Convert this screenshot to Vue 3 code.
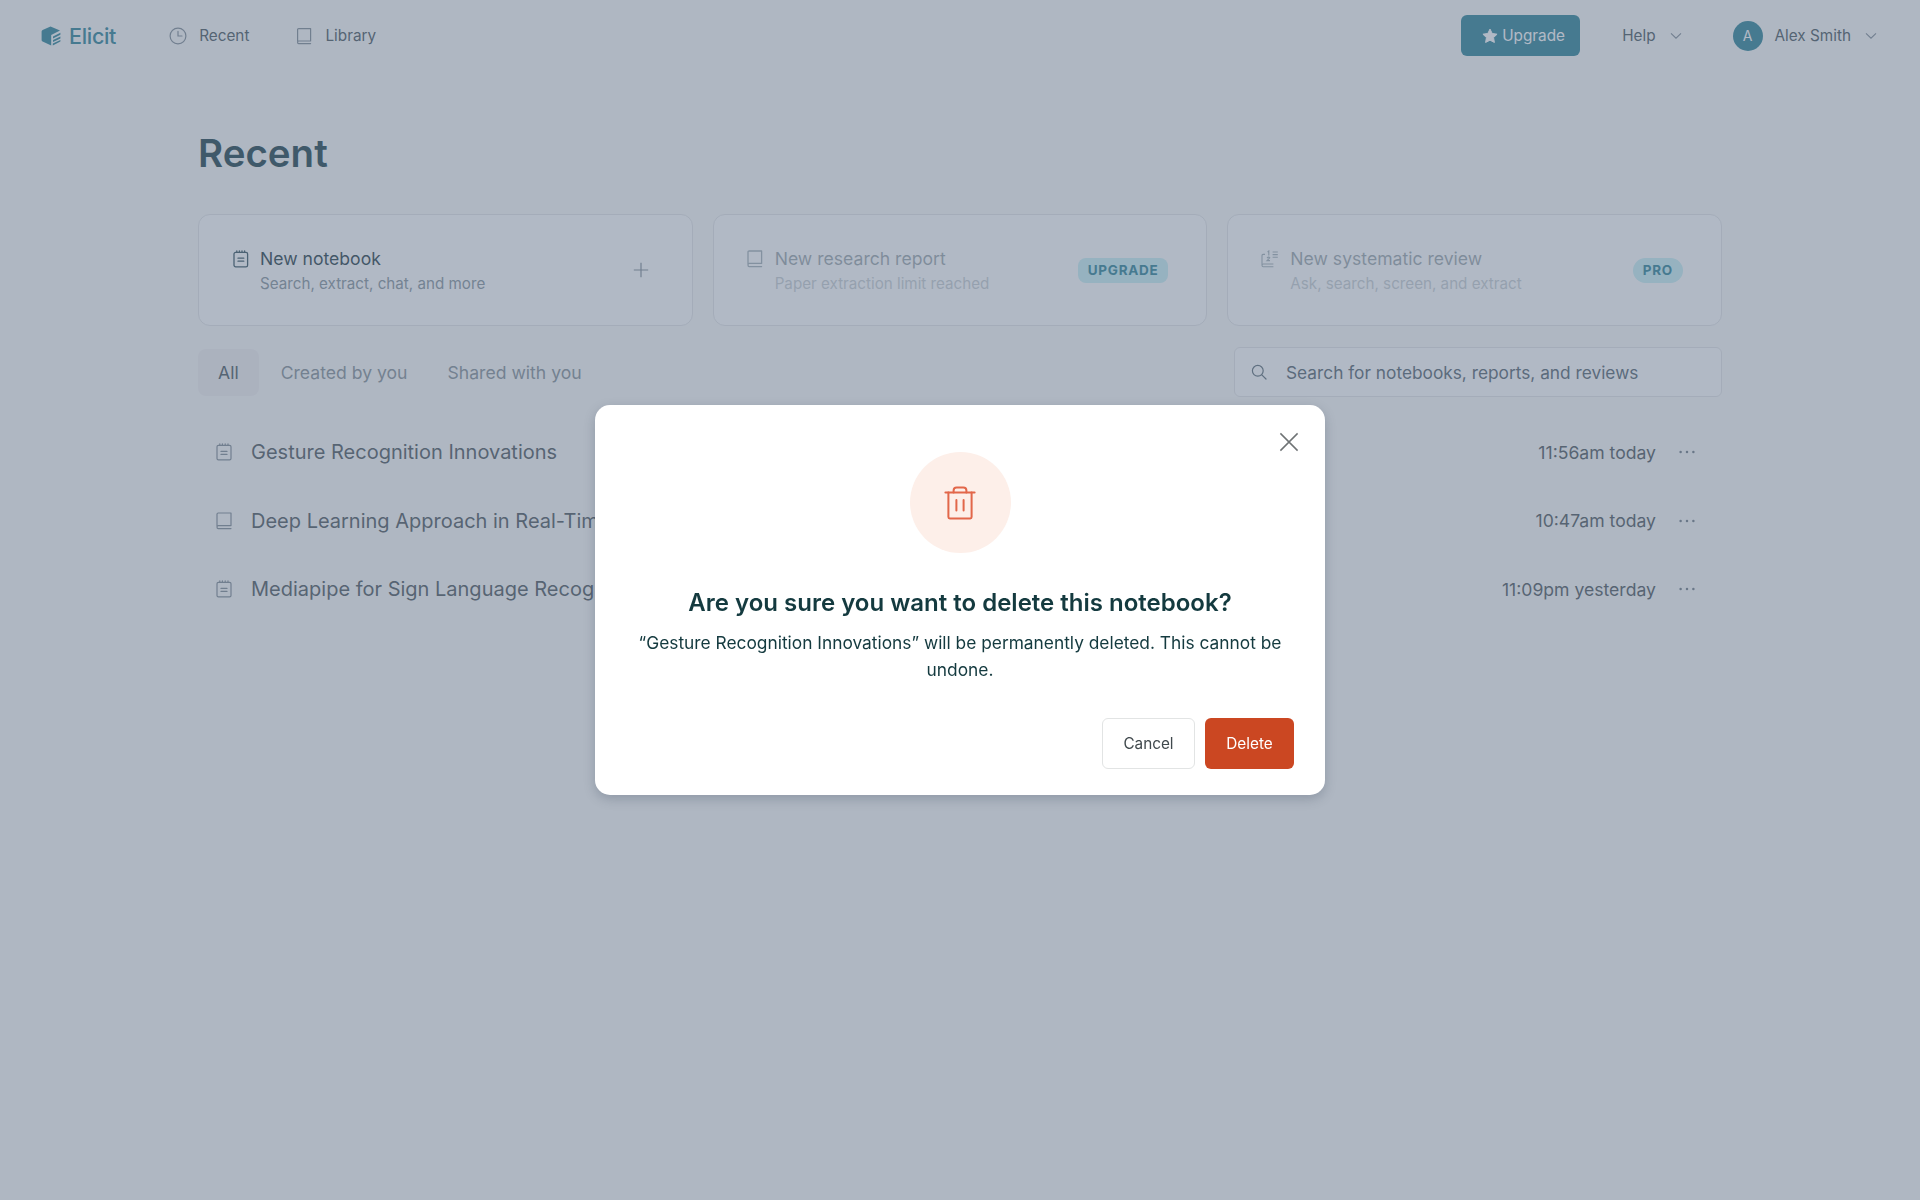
<script setup>
const rows = [
  { name: 'Gesture Recognition Innovations', time: '11:56am today', icon: 'note' },
  { name: 'Deep Learning Approach in Real-Time Gesture Detection', time: '10:47am today', icon: 'book' },
  { name: 'Mediapipe for Sign Language Recognition Systems', time: '11:09pm yesterday', icon: 'note' },
]
</script>

<template>
  <div class="page">
    <header class="topbar">
      <div class="brand">
        <svg class="logo" viewBox="0 0 20 20" width="20" height="20">
          <path d="M9.5 0.5 L19 4.6 L10.2 9 L10.2 19.4 L1.6 15.6 Q0.6 15.1 0.6 14 L0.6 5.6 Q0.6 4.6 1.6 4.1 Z" fill="#288095" />
          <path d="M12 10.4 L19.4 6.8 L19.4 8.8 L12 12.4 Z M12 14 L19.4 10.4 L19.4 12.4 L12 16 Z M11.8 17.6 L19.4 14 L19.4 15.6 L11.8 19.4 Z" fill="#288095" />
        </svg>
        <span class="brand-name">Elicit</span>
      </div>
      <nav class="nav">
        <a class="nav-item">
          <svg viewBox="0 0 18 18" width="18" height="18" fill="none" stroke="#7f8a93" stroke-width="1.2" stroke-linecap="round">
            <circle cx="9" cy="9" r="7.9" />
            <path d="M9 4.4 V9 H13" />
          </svg>
          Recent
        </a>
        <a class="nav-item">
          <svg viewBox="0 0 18 18" width="18" height="18" fill="none" stroke="#7f8a93" stroke-width="1.2" stroke-linecap="round" stroke-linejoin="round">
            <path d="M2.6 14 V2.6 Q2.6 1.6 3.6 1.6 H15.6 V14 H3.6 Q2.6 14 2.6 15.2 Q2.6 16.6 3.6 16.6 H15.6" />
          </svg>
          Library
        </a>
      </nav>
      <div class="top-right">
        <button class="upgrade-btn">
          <svg viewBox="0 0 24 24" width="16" height="16" fill="#ffffff">
            <path d="M12 1.6 L15.3 8.2 L22.6 9.3 L17.3 14.4 L18.6 21.7 L12 18.3 L5.4 21.7 L6.7 14.4 L1.4 9.3 L8.7 8.2 Z" stroke="#ffffff" stroke-width="1.5" stroke-linejoin="round" />
          </svg>
          Upgrade
        </button>
        <div class="menu help-menu">
          Help
          <svg class="chev" viewBox="0 0 12 8" width="12" height="8" fill="none" stroke="#7f8a93" stroke-width="1.1"><path d="M1 1.4 L6 6.2 L11 1.4" /></svg>
        </div>
        <div class="menu">
          <span class="avatar">A</span>
          Alex Smith
          <svg class="chev" viewBox="0 0 12 8" width="12" height="8" fill="none" stroke="#7f8a93" stroke-width="1.1"><path d="M1 1.4 L6 6.2 L11 1.4" /></svg>
        </div>
      </div>
    </header>

    <main class="main">
      <h1 class="title">Recent</h1>

      <section class="cards">
        <div class="card">
          <svg class="card-icon" viewBox="0 0 16 18" width="16" height="18" fill="none" stroke="#33505c" stroke-width="1.3" stroke-linecap="round" stroke-linejoin="round">
            <rect x="1" y="2.4" width="13.6" height="14.4" rx="1.6" />
            <path d="M3.8 0.8 V2.4 M6.4 0.8 V2.4 M9 0.8 V2.4 M11.6 0.8 V2.4 M5 8.2 H10.8 M5 11.2 H10.8" />
          </svg>
          <div class="card-text">
            <div class="card-title">New notebook</div>
            <div class="card-sub">Search, extract, chat, and more</div>
          </div>
          <svg class="plus" viewBox="0 0 16 16" width="16" height="16" fill="none" stroke="#7f8a93" stroke-width="1.2"><path d="M8 .8 V15.2 M.8 8 H15.2" /></svg>
        </div>

        <div class="card disabled">
          <div class="faded">
            <svg class="card-icon" viewBox="0 0 16 18" width="16" height="18" fill="none" stroke="#33505c" stroke-width="1.3" stroke-linecap="round" stroke-linejoin="round">
              <path d="M1 14 V2.2 Q1 1 2.2 1 H14.6 V13.4 H2.2 Q1 13.4 1 15 Q1 16.6 2.2 16.6 H14.6" />
            </svg>
            <div class="card-text">
              <div class="card-title">New research report</div>
              <div class="card-sub">Paper extraction limit reached</div>
            </div>
          </div>
          <span class="badge">UPGRADE</span>
        </div>

        <div class="card disabled">
          <div class="faded">
            <svg class="card-icon wide" viewBox="0 0 18 18" width="18" height="18" fill="none" stroke="#33505c" stroke-width="1.1">
              <path d="M4 4.4 H2 Q1 4.4 1 5.4 V15.2 Q1 14 2.2 14 H12.4 M1 15.2 Q1 16.8 2.2 16.8 H12.4" />
              <path d="M6.6 2 L7.8 1 V5.4 M6 8 Q7.8 6.4 8.8 7.8 L6 10.6 H9 M11.6 2 H16.8 M11.6 4.6 H16.8 M11.6 7.2 H16.8" />
            </svg>
            <div class="card-text">
              <div class="card-title">New systematic review</div>
              <div class="card-sub">Ask, search, screen, and extract</div>
            </div>
          </div>
          <span class="badge pro">PRO</span>
        </div>
      </section>

      <section class="filters">
        <div class="tabs">
          <span class="tab active">All</span>
          <span class="tab">Created by you</span>
          <span class="tab">Shared with you</span>
        </div>
        <div class="search">
          <svg viewBox="0 0 16 16" width="16" height="16" fill="none" stroke="#5c6c76" stroke-width="1.2" stroke-linecap="round">
            <circle cx="6.8" cy="6.8" r="5.4" />
            <path d="M10.8 10.8 L15 15" />
          </svg>
          <span>Search for notebooks, reports, and reviews</span>
        </div>
      </section>

      <ul class="list">
        <li v-for="row in rows" :key="row.name" class="row">
          <svg v-if="row.icon === 'note'" viewBox="0 0 16 18" width="16" height="18" fill="none" stroke="#7f8a93" stroke-width="1.2" stroke-linecap="round" stroke-linejoin="round">
            <rect x="1" y="2.4" width="14" height="14.4" rx="1.4" />
            <path d="M3.8 0.8 V2.4 M6.4 0.8 V2.4 M9.2 0.8 V2.4 M12 0.8 V2.4 M5 8.4 H11 M5 11.4 H11" />
          </svg>
          <svg v-else viewBox="0 0 16 18" width="16" height="18" fill="none" stroke="#7f8a93" stroke-width="1.2" stroke-linecap="round" stroke-linejoin="round">
            <path d="M1 14 V2.2 Q1 1 2.2 1 H15 V13.6 H2.2 Q1 13.6 1 15 Q1 16.6 2.2 16.6 H15" />
          </svg>
          <span class="row-name">{{ row.name }}</span>
          <span class="row-time">{{ row.time }}</span>
          <svg class="dots" viewBox="0 0 16 4" width="16" height="4" fill="#6f7b84">
            <circle cx="1.6" cy="2" r="1.25" /><circle cx="8" cy="2" r="1.25" /><circle cx="14.4" cy="2" r="1.25" />
          </svg>
        </li>
      </ul>
    </main>

    <div class="overlay">
      <div class="modal">
        <svg class="close" viewBox="0 0 20 20" width="20" height="20" fill="none" stroke="#6f7375" stroke-width="1.5"><path d="M1.4 1.4 L18.6 18.6 M18.6 1.4 L1.4 18.6" /></svg>
        <div class="trash-circle">
          <svg viewBox="0 0 32 34" width="32" height="34" fill="none" stroke="#e2674a" stroke-width="2" stroke-linecap="round" stroke-linejoin="round">
            <path d="M1.4 6.4 H30.6" />
            <path d="M4.4 6.4 V31 Q4.4 32.4 5.8 32.4 H26.2 Q27.6 32.4 27.6 31 V6.4" />
            <path d="M9.6 6.4 V4.4 Q9.6 1.4 12.6 1.4 H19.4 Q22.4 1.4 22.4 4.4 V6.4" />
            <path d="M12.4 14 V24.4 M19.6 14 V24.4" />
          </svg>
        </div>
        <h2 class="modal-title">Are you sure you want to delete this notebook?</h2>
        <p class="modal-text">“Gesture Recognition Innovations” will be permanently deleted. This cannot be undone.</p>
        <div class="modal-actions">
          <button class="btn cancel">Cancel</button>
          <button class="btn delete">Delete</button>
        </div>
      </div>
    </div>
  </div>
</template>

<style>
body {
  background: #fbfbf9;
}
</style>

<style scoped>
.page {
  min-height: 100vh;
  font-family: Inter, "Liberation Sans", sans-serif;
  color: #46545b;
}

.topbar {
  display: flex;
  align-items: center;
  height: 71px;
  padding: 0 43px 0 41px;
}

.brand {
  display: flex;
  align-items: center;
  gap: 8px;
}

.brand-name {
  font-size: 21.5px;
  font-weight: 500;
  color: #288095;
  letter-spacing: -0.3px;
}

.nav {
  display: flex;
  gap: 46px;
  margin-left: 53px;
}

.nav-item {
  display: flex;
  align-items: center;
  gap: 12px;
  font-size: 15.3px;
}

.top-right {
  display: flex;
  align-items: center;
  margin-left: auto;
}

.upgrade-btn {
  display: flex;
  align-items: center;
  gap: 4px;
  width: 119px;
  height: 41px;
  padding: 0 0 0 21px;
  border: 0;
  border-radius: 6px;
  background: #288095;
  color: #fff;
  font: inherit;
  font-size: 15.3px;
}

.menu {
  display: flex;
  align-items: center;
  font-size: 15.3px;
}

.help-menu {
  margin-left: 42px;
  margin-right: 51px;
}

.chev {
  margin-left: 14px;
}

.avatar {
  display: flex;
  align-items: center;
  justify-content: center;
  width: 30px;
  height: 30px;
  margin-right: 12px;
  border-radius: 50%;
  background: #288095;
  color: #fff;
  font-size: 14px;
}

.main {
  width: 1524px;
  margin: 0 auto;
}

.title {
  margin: 58px 0 0;
  font-size: 38.5px;
  line-height: 48px;
  font-weight: 600;
  color: #1a3f48;
}

.cards {
  display: grid;
  grid-template-columns: repeat(3, 1fr);
  gap: 20px;
  margin-top: 37px;
}

.card {
  display: flex;
  align-items: center;
  justify-content: space-between;
  box-sizing: border-box;
  height: 112px;
  padding: 0 38px 0 33px;
  border: 1px solid #e4e5e6;
  border-radius: 12px;
  background: #fff;
  position: relative;
}

.card > .card-icon {
  position: absolute;
  left: 34px;
  top: 35px;
}

.card > .card-text {
  margin-left: 28px;
}

.plus {
  margin-right: 5px;
}

.faded {
  display: flex;
  align-items: flex-start;
  gap: 12px;
  opacity: 0.45;
}

.faded .card-icon {
  margin-top: 4px;
}

.wide {
  margin-right: -1px;
}

.card-title {
  font-size: 17.6px;
  line-height: 26px;
  color: #1f3a44;
}

.card-sub {
  margin-top: 1px;
  font-size: 15.2px;
  line-height: 22px;
  color: #85929a;
}

.badge {
  padding: 0 10px;
  height: 25px;
  line-height: 25px;
  border-radius: 8px;
  background: #c8f0f4;
  color: #288095;
  font-size: 13.5px;
  font-weight: 700;
  letter-spacing: 0.7px;
}

.badge.pro {
  border-radius: 13px;
}

.filters {
  display: flex;
  align-items: center;
  justify-content: space-between;
  margin-top: 21px;
}

.tabs {
  display: flex;
  gap: 0;
}

.tab {
  padding: 12px 20px;
  font-size: 17.6px;
  line-height: 23px;
  color: #848f95;
}

.tab.active {
  margin-right: 2px;
  border-radius: 8px;
  background: #f3f0f1;
  color: #46545b;
}

.search {
  display: flex;
  align-items: center;
  gap: 19px;
  box-sizing: border-box;
  width: 488px;
  height: 50px;
  padding: 0 16px;
  border: 1px solid #e4e5e6;
  border-radius: 6px;
  background: #fff;
  font-size: 17.3px;
  color: #53626c;
}

.list {
  list-style: none;
  margin: 21px 0 0;
  padding: 0;
}

.row {
  display: flex;
  align-items: center;
  height: 68.5px;
  padding: 0 27px 0 18px;
  color: #4b555a;
}

.row-name {
  margin-left: 19px;
  font-size: 20px;
}

.row-time {
  margin-left: auto;
  font-size: 17.6px;
}

.dots {
  margin-left: 23px;
}

.overlay {
  position: fixed;
  inset: 0;
  display: flex;
  align-items: center;
  justify-content: center;
  background: rgba(100, 116, 139, 0.5);
}

.modal {
  position: relative;
  display: flex;
  flex-direction: column;
  align-items: center;
  box-sizing: border-box;
  width: 730px;
  height: 390px;
  padding: 47px 31px 26px;
  border-radius: 15px;
  background: #fff;
  box-shadow: 0 4px 12px rgba(30, 45, 70, 0.22);
}

.close {
  position: absolute;
  top: 27px;
  right: 26px;
}

.trash-circle {
  display: flex;
  align-items: center;
  justify-content: center;
  flex: none;
  width: 101px;
  height: 101px;
  border-radius: 50%;
  background: #fdefe9;
}

.modal-title {
  margin: 32px 0 0;
  font-size: 24px;
  line-height: 36px;
  font-weight: 600;
  color: #143a3f;
}

.modal-text {
  width: 650px;
  margin: 8px 0 0;
  font-size: 17.33px;
  line-height: 27px;
  text-align: center;
  color: #143a3f;
}

.modal-actions {
  display: flex;
  justify-content: flex-end;
  gap: 10px;
  margin-top: auto;
  align-self: stretch;
}

.btn {
  height: 51px;
  border-radius: 6px;
  font: inherit;
  font-size: 15.3px;
}

.cancel {
  width: 93px;
  border: 1px solid #e2e4e4;
  background: #fff;
  color: #40494d;
}

.delete {
  width: 89px;
  border: 0;
  background: #cb4722;
  color: #fff;
}
</style>
